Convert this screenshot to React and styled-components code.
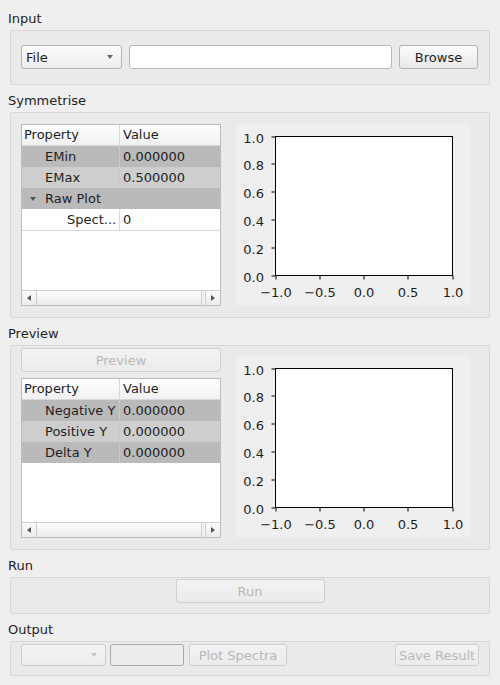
import React from 'react';
import styled, { createGlobalStyle } from 'styled-components';

const COLOURS = {
    page: '#efefef',
    group: '#eaeaea',
    groupBorder: '#d6d6d6',
    text: '#1e1e1e',
    disabledText: '#b8b8b8',
    darkRow: '#bababa',
    lightRow: '#cecece'
};

const GlobalStyle = createGlobalStyle`
    body {
        margin: 0;
        background: ${COLOURS.page};
        font-family: "DejaVu Sans", "Liberation Sans", sans-serif;
        font-size: 13px;
        color: ${COLOURS.text};
    }
`;

const Page = styled.div`
    display: flex;
    flex-direction: column;
    padding: 10px 10px 0 10px;
    width: 480px;
`;

const SectionTitle = styled.div`
    height: 17px;
    line-height: 17px;
    padding-left: 0;
    margin-left: -2px;
    margin-top: ${props => (props.$first ? 0 : 7)}px;
    margin-bottom: 3px;
`;

const Group = styled.div`
    box-sizing: border-box;
    width: 480px;
    border: 1px solid ${COLOURS.groupBorder};
    border-radius: 2px;
    background: ${COLOURS.group};
    padding: ${props => props.$pad};
    display: flex;
    align-items: ${props => props.$align || 'flex-start'};
    justify-content: ${props => props.$justify || 'flex-start'};
    gap: ${props => props.$gap || 0}px;
`;

const Column = styled.div`
    display: flex;
    flex-direction: column;
    gap: 6px;
`;

const Button = styled.button`
    box-sizing: border-box;
    width: ${props => props.$w}px;
    height: ${props => props.$h || 24}px;
    padding: 0;
    margin: 0;
    font-family: inherit;
    font-size: 13px;
    border: 1px solid ${props => (props.disabled ? '#cfcfcf' : '#b2b2b2')};
    border-radius: 3px;
    background: ${props =>
        props.disabled
            ? 'linear-gradient(#f3f3f3, #ebebeb)'
            : 'linear-gradient(#fcfcfc, #e8e8e8)'};
    color: ${props => (props.disabled ? COLOURS.disabledText : COLOURS.text)};
`;

const Combo = styled.div`
    box-sizing: border-box;
    width: ${props => props.$w}px;
    height: ${props => props.$h || 24}px;
    display: flex;
    align-items: center;
    justify-content: space-between;
    padding: 0 8px 0 4px;
    border: 1px solid ${props => (props.$disabled ? '#cdcdcd' : '#b4b4b4')};
    border-radius: 3px;
    background: ${props =>
        props.$disabled
            ? 'linear-gradient(#f4f4f4, #ececec)'
            : 'linear-gradient(#fcfcfc, #ececec)'};
`;

const ComboArrow = styled.span`
    width: 0;
    height: 0;
    border-left: 3px solid transparent;
    border-right: 3px solid transparent;
    border-top: 4px solid ${props => (props.$disabled ? '#c4c4c4' : '#666')};
`;

const LineEdit = styled.div`
    box-sizing: border-box;
    width: ${props => props.$w}px;
    height: ${props => props.$h || 24}px;
    border: 1px solid ${props => (props.$disabled ? '#a9a9a9' : '#b9b9b9')};
    border-radius: 3px;
    background: ${props => (props.$disabled ? '#ececec' : '#ffffff')};
`;

const Spacer = styled.div`
    flex: 1;
`;

const TableBox = styled.div`
    box-sizing: border-box;
    width: 200px;
    height: ${props => props.$h}px;
    border: 1px solid #bcbcbc;
    background: #ffffff;
    display: flex;
    flex-direction: column;
`;

const Row = styled.div`
    display: flex;
    height: ${props => (props.$header ? 20 : 21)}px;
    line-height: ${props => (props.$header ? 20 : 21)}px;
    background: ${props => props.$bg};
    border-bottom: ${props => (props.$header || props.$plain ? '1px solid #d8d8d8' : 'none')};
    flex-shrink: 0;
`;

const NameCell = styled.div`
    box-sizing: border-box;
    width: 98px;
    padding-left: ${props => props.$indent}px;
    border-right: 1px solid ${props => props.$divider};
    display: flex;
    align-items: center;
    white-space: nowrap;
    overflow: hidden;
`;

const ValueCell = styled.div`
    flex: 1;
    padding-left: 3px;
    white-space: nowrap;
`;

const Expander = styled.span`
    width: 0;
    height: 0;
    margin: 0 9px 0 -15px;
    border-left: 3px solid transparent;
    border-right: 3px solid transparent;
    border-top: 4px solid #555;
`;

const Filler = styled.div`
    flex: 1;
`;

const ScrollBar = styled.div`
    display: flex;
    height: 14px;
    border-top: 1px solid #cfcfcf;
    background: #f1f1f1;
    flex-shrink: 0;
`;

const ScrollButton = styled.div`
    width: 14px;
    display: flex;
    align-items: center;
    justify-content: center;
    border-${props => (props.$side === 'left' ? 'right' : 'left')}: 1px solid #cfcfcf;
    background: linear-gradient(#fafafa, #ececec);
`;

const ScrollArrow = styled.span`
    width: 0;
    height: 0;
    border-top: 3px solid transparent;
    border-bottom: 3px solid transparent;
    border-${props => (props.$side === 'left' ? 'right' : 'left')}: 4px solid #555;
`;

const ScrollHandle = styled.div`
    width: 164px;
    background: linear-gradient(#fdfdfd, #ebebeb);
    border-right: 1px solid #cfcfcf;
`;

const PlotCanvas = styled.div`
    width: 234px;
    height: 182px;
    flex-shrink: 0;
`;

const PropertyTable = ({ rows, height }) => (
    <TableBox $h={height}>
        <Row $header $bg="linear-gradient(#ffffff, #f1f1f1)">
            <NameCell $indent={2} $divider="#d8d8d8">Property</NameCell>
            <ValueCell>Value</ValueCell>
        </Row>
        {rows.map(row => (
            <Row
                key={row.name}
                $bg={row.tone === 'dark' ? COLOURS.darkRow : row.tone === 'light' ? COLOURS.lightRow : '#ffffff'}
                $plain={!row.tone}
            >
                <NameCell
                    $indent={row.indent}
                    $divider={row.span ? 'transparent' : row.tone ? '#c9c9c9' : '#d8d8d8'}
                >
                    {row.expander && <Expander />}
                    {row.name}
                </NameCell>
                <ValueCell>{row.value}</ValueCell>
            </Row>
        ))}
        <Filler />
        <ScrollBar>
            <ScrollButton $side="left">
                <ScrollArrow $side="left" />
            </ScrollButton>
            <ScrollHandle />
            <Filler />
            <ScrollButton $side="right">
                <ScrollArrow $side="right" />
            </ScrollButton>
        </ScrollBar>
    </TableBox>
);

const Plot = () => {
    const left = 39.5;
    const right = 216.5;
    const top = 12.5;
    const bottom = 151.5;
    const yTicks = [0, 0.2, 0.4, 0.6, 0.8, 1.0];
    const xTicks = ['\u22121.0', '\u22120.5', '0.0', '0.5', '1.0'];
    return (
        <PlotCanvas>
            <svg width="234" height="182" viewBox="0 0 234 182">
                <rect x="0" y="0" width="234" height="182" fill="#efefef" />
                <rect
                    x={left}
                    y={top}
                    width={right - left}
                    height={bottom - top}
                    fill="#ffffff"
                    stroke="#000"
                    strokeWidth="1"
                />
                {yTicks.map((v, i) => {
                    const y = Math.round(bottom - (i * (bottom - top)) / 5) + 0.5;
                    return (
                        <g key={v}>
                            <line x1={left - 4} x2={left} y1={y - 0.5} y2={y - 0.5} stroke="#000" />
                            <text
                                x={28}
                                y={y + 5.5}
                                textAnchor="end"
                                fontSize="13"
                                fontFamily="DejaVu Sans"
                                fill="#1e1e1e"
                            >
                                {v.toFixed(1)}
                            </text>
                        </g>
                    );
                })}
                {xTicks.map((label, i) => {
                    const x = Math.round(left + (i * (right - left)) / 4) + 0.5;
                    return (
                        <g key={label}>
                            <line x1={x - 0.5} x2={x - 0.5} y1={bottom} y2={bottom + 4} stroke="#000" />
                            <text
                                x={x - 0.5}
                                y={172.5}
                                textAnchor="middle"
                                fontSize="13"
                                fontFamily="DejaVu Sans"
                                fill="#1e1e1e"
                            >
                                {label}
                            </text>
                        </g>
                    );
                })}
            </svg>
        </PlotCanvas>
    );
};

const symmetriseRows = [
    { name: 'EMin', value: '0.000000', tone: 'dark', indent: 23 },
    { name: 'EMax', value: '0.500000', tone: 'light', indent: 23 },
    { name: 'Raw Plot', value: '', tone: 'dark', indent: 23, expander: true, span: true },
    { name: 'Spect...', value: '0', indent: 45 }
];

const previewRows = [
    { name: 'Negative Y', value: '0.000000', tone: 'dark', indent: 23 },
    { name: 'Positive Y', value: '0.000000', tone: 'light', indent: 23 },
    { name: 'Delta Y', value: '0.000000', tone: 'dark', indent: 23 }
];

const App = () => (
    <Page>
        <GlobalStyle />
        <SectionTitle $first>Input</SectionTitle>
        <Group $pad="14px 0 15px 10px" $gap={7}>
            <Combo $w={101}>
                File
                <ComboArrow />
            </Combo>
            <LineEdit $w={263} />
            <Button $w={79}>Browse</Button>
        </Group>

        <SectionTitle>Symmetrise</SectionTitle>
        <Group $pad="11px 0 11px 10px" $gap={15}>
            <PropertyTable rows={symmetriseRows} height={182} />
            <Plot />
        </Group>

        <SectionTitle>Preview</SectionTitle>
        <Group $pad="2px 0 11px 10px" $gap={15} $align="flex-end">
            <Column>
                <Button $w={200} disabled>
                    Preview
                </Button>
                <PropertyTable rows={previewRows} height={160} />
            </Column>
            <Plot />
        </Group>

        <SectionTitle>Run</SectionTitle>
        <Group $pad="1px 0 10px 0" $justify="center">
            <Button $w={149} disabled>
                Run
            </Button>
        </Group>

        <SectionTitle>Output</SectionTitle>
        <Group $pad="2px 10px 9px 10px" $align="center">
            <Combo $w={85} $h={22} $disabled>
                <span />
                <ComboArrow $disabled />
            </Combo>
            <LineEdit $w={74} $h={22} $disabled style={{ marginLeft: 4 }} />
            <Button $w={98} $h={22} disabled style={{ marginLeft: 5 }}>
                Plot Spectra
            </Button>
            <Spacer />
            <Button $w={84} $h={22} disabled>
                Save Result
            </Button>
        </Group>
    </Page>
);

export default App;
